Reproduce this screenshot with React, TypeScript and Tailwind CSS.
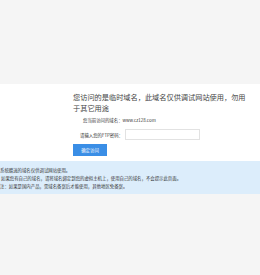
export default function App() {
  return (
    <div className="flex min-h-[275px] w-full flex-col bg-[#f5f5f5] font-['Noto_Sans_CJK_SC',sans-serif] text-[#333]">
      <div className="h-[84px]" />
      <div className="bg-white pb-[5px] pl-[73px] pt-[8px]">
        <h1 className="w-[176px] text-[7.2px] leading-[10.5px] font-normal text-[#444]">
          您访问的是临时域名，此域名仅供调试网站使用，勿用于其它用途
        </h1>
        <p className="mt-[4px] pl-[10px] text-[4.4px] leading-[6px]">您当前访问的域名：www.cz128.com</p>
        <div className="mt-[6px] flex items-center pl-[7px]">
          <span className="text-[4.4px] leading-[6px]">请输入您的FTP密码：</span>
          <div className="ml-[2px] h-[11px] w-[75px] border border-[#e2e2e2] bg-white" />
        </div>
        <button className="mt-[4px] flex h-[12px] w-[34px] items-center justify-center bg-[#3a8ee6] text-[4.4px] text-white">
          确定访问
        </button>
      </div>
      <div className="bg-[#dcedfb] pb-[4px] pt-[5px] text-[4.4px] leading-[8px]">
        <p>系统赠送的域名仅供调试网站使用。</p>
        <p className="pl-px">如果您有自己的域名，请将域名绑定到您的虚拟主机上，使用自己的域名，不会提示此页面。</p>
        <p>注：如果是国内产品，需域名备案后才能使用，其他地区免备案。</p>
      </div>
      <div className="flex-1" />
    </div>
  );
}
